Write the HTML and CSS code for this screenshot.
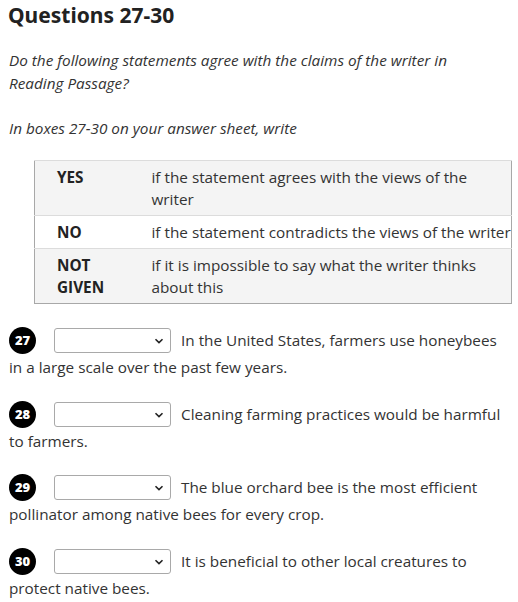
FILE: index.html
```html
<!DOCTYPE html>
<html>
<head>
<meta charset="utf-8">
<link rel="stylesheet" href="styles.css">
</head>
<body>
<h2 class="title">Questions 27-30</h2>
<p class="intro">Do the following statements agree with the claims of the writer in Reading Passage?</p>
<p class="intro">In boxes 27-30 on your answer sheet, write</p>
<table class="key">
  <tr class="shade"><td class="k">YES</td><td class="v">if the statement agrees with the views of the writer</td></tr>
  <tr><td class="k">NO</td><td class="v nowrap">if the statement contradicts the views of the writer</td></tr>
  <tr class="shade"><td class="k">NOT GIVEN</td><td class="v">if it is impossible to say what the writer thinks about this</td></tr>
</table>

<div class="q"><span class="num">27</span><span class="sel"><select><option></option></select><svg class="chev" viewBox="0 0 10 6" width="10" height="6"><path d="M1.5 1.2 L5 4.6 L8.5 1.2" fill="none" stroke="#222" stroke-width="1.6"/></svg></span><span class="txt">In the United States, farmers use honeybees in a large scale over the past few years.</span></div>
<div class="q"><span class="num">28</span><span class="sel"><select><option></option></select><svg class="chev" viewBox="0 0 10 6" width="10" height="6"><path d="M1.5 1.2 L5 4.6 L8.5 1.2" fill="none" stroke="#222" stroke-width="1.6"/></svg></span><span class="txt">Cleaning farming practices would be harmful to farmers.</span></div>
<div class="q"><span class="num">29</span><span class="sel"><select><option></option></select><svg class="chev" viewBox="0 0 10 6" width="10" height="6"><path d="M1.5 1.2 L5 4.6 L8.5 1.2" fill="none" stroke="#222" stroke-width="1.6"/></svg></span><span class="txt">The blue orchard bee is the most efficient pollinator among native bees for every crop.</span></div>
<div class="q"><span class="num">30</span><span class="sel"><select><option></option></select><svg class="chev" viewBox="0 0 10 6" width="10" height="6"><path d="M1.5 1.2 L5 4.6 L8.5 1.2" fill="none" stroke="#222" stroke-width="1.6"/></svg></span><span class="txt">It is beneficial to other local creatures to protect native bees.</span></div>
</body>
</html>
```
FILE: styles.css
```css
body {
  margin: 0;
  padding: 0 6px 0 9px;
  font-family: "Open Sans", "Noto Sans", sans-serif;
  font-size: 15.3px;
  color: #333;
  background: #fff;
}
.title {
  margin: 2px 0 0 -1px;
  font-family: "Noto Sans", "DejaVu Sans", sans-serif;
  font-weight: 700;
  font-size: 21px;
  line-height: 26px;
  color: #222;
}
.intro {
  font-style: italic;
  line-height: 23px;
  margin: 21px 0 0 0;
  max-width: 478px;
}
.intro + .intro { margin-top: 22px; }
.key {
  margin: 20px 0 0 25px;
  width: 478px;
  border-collapse: collapse;
  border: 1px solid #a8a8a8;
  table-layout: fixed;
}
.key td {
  padding: 5px 0 5px 0;
  line-height: 22px;
  vertical-align: top;
  border-top: 1px solid #dcdcdc;
}
.key .k {
  width: 117px;
  box-sizing: border-box;
  padding-left: 22px;
  padding-right: 30px;
  font-weight: 700;
  color: #222;
}
.key .nowrap { white-space: nowrap; }
.key .shade td { background: #f4f4f4; }
.q {
  line-height: 27px;
  margin-top: 19.7px;
}
.key + .q { margin-top: 23px; }
.num {
  display: inline-flex;
  align-items: center;
  justify-content: center;
  width: 27px;
  height: 27px;
  border-radius: 50%;
  background: #000;
  color: #fff;
  font-weight: 800;
  font-size: 13px;
  line-height: 1;
  vertical-align: top;
}
.sel {
  position: relative;
  display: inline-block;
  vertical-align: top;
  margin: 1px 0 0 18px;
  width: 117px;
  height: 25px;
}
.sel select {
  appearance: none;
  -webkit-appearance: none;
  width: 117px;
  height: 25px;
  border: 1px solid #a9a9a9;
  border-radius: 3px;
  background: #fff;
  display: block;
}
.chev {
  position: absolute;
  right: 7px;
  top: 10px;
}
.txt { margin-left: 10px; }
```
